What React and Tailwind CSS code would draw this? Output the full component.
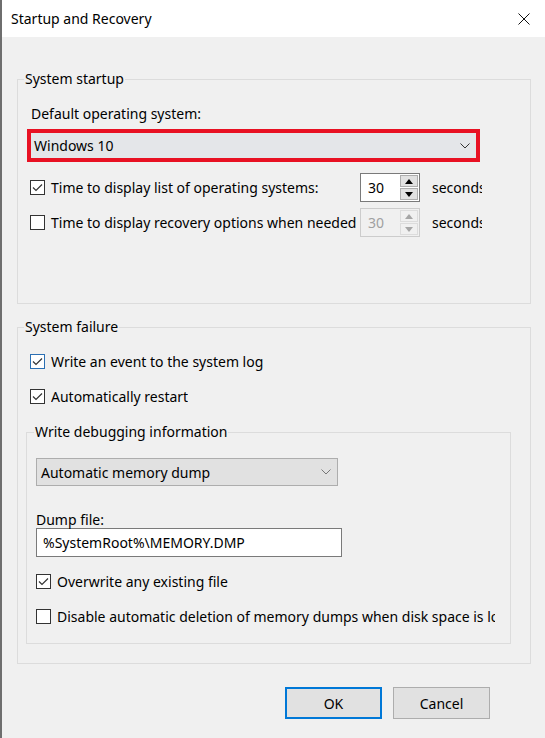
import React from 'react';

const font = "font-['Noto_Sans',sans-serif]";

const Check = ({ checked, focus }) => (
  <span
    className={`flex h-[15px] w-[15px] shrink-0 items-center justify-center border bg-white ${
      focus ? 'border-[#2b6fb3]' : 'border-[#333333]'
    }`}
  >
    {checked && (
      <svg width="13" height="13" viewBox="0 0 13 13">
        <path d="M2 6.5 L5 9.5 L11 3.5" fill="none" stroke="#333" strokeWidth="1.2" />
      </svg>
    )}
  </span>
);

const CheckRow = ({ checked, focus, label, className = '' }) => (
  <div className={`flex h-[20px] items-center gap-[6px] ${className}`}>
    <Check checked={checked} focus={focus} />
    <span className="whitespace-nowrap overflow-hidden">{label}</span>
  </div>
);

const Chevron = ({ color = '#333' }) => (
  <svg width="10" height="6" viewBox="0 0 10 6">
    <path d="M0.5 0.5 L5 5 L9.5 0.5" fill="none" stroke={color} strokeWidth="1" />
  </svg>
);

const Tri = ({ up, color }) => (
  <svg width="8" height="5" viewBox="0 0 8 5">
    <path d={up ? 'M0 5 L4 0 L8 5 Z' : 'M0 0 L8 0 L4 5 Z'} fill={color} />
  </svg>
);

const Spinner = ({ disabled }) => (
  <div
    className={`flex h-[29px] w-[60px] shrink-0 border ${
      disabled ? 'border-[#cccccc] bg-[#f0f0f0]' : 'border-[#7a7a7a] bg-white'
    }`}
  >
    <div className={`flex-1 pl-[7px] leading-[27px] ${disabled ? 'text-[#a0a0a0]' : 'text-black'}`}>30</div>
    <div className="flex w-[20px] flex-col gap-[1px] p-[1px]">
      <div
        className={`flex flex-1 items-center justify-center border ${
          disabled ? 'border-[#dcdcdc] bg-[#f0f0f0]' : 'border-[#adadad] bg-[#e1e1e1]'
        }`}
      >
        <Tri up color={disabled ? '#a6a6a6' : '#000'} />
      </div>
      <div
        className={`flex flex-1 items-center justify-center border ${
          disabled ? 'border-[#dcdcdc] bg-[#f0f0f0]' : 'border-[#adadad] bg-[#e1e1e1]'
        }`}
      >
        <Tri color={disabled ? '#a6a6a6' : '#000'} />
      </div>
    </div>
  </div>
);

const Group = ({ title, legendClass = 'ml-[6px]', className = '', children }) => (
  <fieldset className={`border border-[#dcdcdc] p-0 ${className}`}>
    <legend className={`${legendClass} px-[1px] leading-[20px]`}>{title}</legend>
    {children}
  </fieldset>
);

export default function App() {
  return (
    <div className={`${font} h-[738px] w-[545px] overflow-hidden border-l-[2px] border-[#6e6e6e] bg-[#f0f0f0] text-[14px] text-black`}>
      {/* title bar */}
      <div className="flex h-[37px] items-center justify-between bg-white pl-[9px] pr-[15px]">
        <span className="text-[14px]">Startup and Recovery</span>
        <svg width="12" height="12" viewBox="0 0 12 12">
          <path d="M0.5 0.5 L11.5 11.5 M11.5 0.5 L0.5 11.5" stroke="#111" strokeWidth="1" />
        </svg>
      </div>

      <div className="pl-[15px] pr-[14px]">
        <Group title="System startup" className="mt-[32px]">
          <div className="pl-[9px] pb-[66px]">
            <div className="mt-[15px] pl-[4px] leading-[20px]">Default operating system:</div>
            <div className="mt-[5px] w-[453px] border-[4px] border-[#e81123]">
              <div className="flex h-[25px] items-center justify-between bg-[#e4e6e9] pl-[3px] pr-[6px]">
                <span>Windows 10</span>
                <Chevron />
              </div>
            </div>
            <div className="mt-[11px] flex items-center pl-[3px]">
              <div className="flex w-[326px] items-center gap-[6px] overflow-hidden whitespace-nowrap">
                <Check checked />
                <span>Time to display list of operating systems:</span>
              </div>
              <div className="ml-[4px]">
                <Spinner />
              </div>
              <span className="ml-[12px] w-[50px] overflow-hidden whitespace-nowrap">seconds</span>
            </div>
            <div className="mt-[6px] flex items-center pl-[3px]">
              <div className="flex w-[326px] items-center gap-[6px] overflow-hidden whitespace-nowrap">
                <Check />
                <span>Time to display recovery options when needed</span>
              </div>
              <div className="ml-[4px]">
                <Spinner disabled />
              </div>
              <span className="ml-[12px] w-[50px] overflow-hidden whitespace-nowrap">seconds</span>
            </div>
          </div>
        </Group>

        <Group title="System failure" className="mt-[13px]">
          <div className="pl-[8px] pr-[19px] pb-[19px]">
            <CheckRow checked focus label="Write an event to the system log" className="mt-[14px] pl-[4px]" />
            <CheckRow checked label="Automatically restart" className="mt-[15px] pl-[4px]" />

            <Group title="Write debugging information" legendClass="ml-[7px]" className="mt-[16px]">
              <div className="pl-[9px] pb-[17px]">
                <div className="mt-[16px] flex h-[28px] w-[302px] items-center justify-between border border-[#adadad] bg-[#e1e1e1] pl-[4px] pr-[6px]">
                  <span>Automatic memory dump</span>
                  <Chevron color="#777" />
                </div>
                <div className="mt-[26px] leading-[16px]">Dump file:</div>
                <div className="flex h-[29px] w-[306px] items-center border border-[#7a7a7a] bg-white pl-[6px]">
                  %SystemRoot%\MEMORY.DMP
                </div>
                <CheckRow checked label="Overwrite any existing file" className="mt-[14px]" />
                <CheckRow
                  label="Disable automatic deletion of memory dumps when disk space is low"
                  className="mt-[15px] w-[459px]"
                />
              </div>
            </Group>
          </div>
        </Group>

        <div className="mt-[23px] flex justify-end gap-[11px] pr-[41px]">
          <button className="h-[32px] w-[97px] border-[2px] border-[#0078d7] bg-[#e1e1e1]">OK</button>
          <button className="h-[32px] w-[97px] border border-[#adadad] bg-[#e1e1e1]">Cancel</button>
        </div>
      </div>
    </div>
  );
}
